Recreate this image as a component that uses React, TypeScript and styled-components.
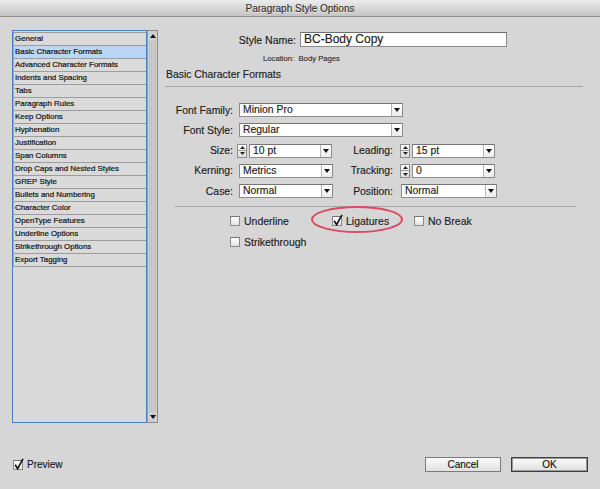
import React from 'react';
import styled, { createGlobalStyle } from 'styled-components';

const Global = createGlobalStyle`
  html, body { margin: 0; padding: 0; background: #d6d6d6; }
  body { font-family: "Liberation Sans", Arial, sans-serif; }
  * { box-sizing: border-box; }
`;

const Window = styled.div`
  width: 600px;
  height: 489px;
  background: #d6d6d6;
  display: flex;
  flex-direction: column;
  overflow: hidden;
  color: #1c1c1c;
  font-family: "Liberation Sans", Arial, sans-serif;
  -webkit-text-stroke: 0.15px currentColor;
`;

const TitleBar = styled.div`
  height: 17px;
  flex: none;
  border-bottom: 1px solid #8e8e8e;
  background: linear-gradient(#ececec, #c4c4c4);
  display: flex;
  align-items: center;
  justify-content: center;
  font-size: 10px;
  color: #333;
  text-shadow: 0 1px 0 rgba(255, 255, 255, 0.6);
`;

const Body = styled.div`
  display: flex;
  padding: 13px 12px 0 12px;
  flex: none;
`;

const ListPanel = styled.div`
  display: flex;
  width: 146px;
  height: 393px;
  flex: none;
`;

const List = styled.div`
  width: 135px;
  height: 100%;
  border: 1px solid #4a7dc4;
  background: #d9d9d9;
  padding-top: 1px;
`;

const ListRow = styled.div<{ $selected?: boolean }>`
  height: 13px;
  border-bottom: 1px solid #9c9c9c;
  border-left: 1px solid #a8a8a8;
  background: ${(p) => (p.$selected ? '#bcd7f6' : '#dadada')};
  font-size: 7.9px;
  line-height: 12px;
  padding-left: 1px;
  color: #141414;
  -webkit-text-stroke: 0.2px #141414;
  white-space: nowrap;
  &:first-child {
    border-top: 1px solid #9c9c9c;
    height: 14px;
  }
`;

const Scrollbar = styled.div`
  width: 11px;
  height: 100%;
  border: 1px solid #8c8c8c;
  border-left-color: #a0a0a0;
  background: repeating-linear-gradient(90deg, #cdcdcd 0 1px, #c1c1c1 1px 2px);
  display: flex;
  flex-direction: column;
  justify-content: space-between;
  align-items: center;
`;

const ScrollArrow = styled.div`
  height: 10px;
  width: 100%;
  display: flex;
  align-items: center;
  justify-content: center;
  background: #cfcfcf;
`;

const RightPanel = styled.div`
  margin-left: 7px;
  flex: 1;
  display: flex;
  flex-direction: column;
`;

const NameRow = styled.div`
  margin-top: 2px;
  display: flex;
  align-items: center;
  height: 15px;
`;

const NameLabel = styled.div`
  width: 131px;
  text-align: right;
  font-size: 10.5px;
  margin-right: 4px;
`;

const NameInput = styled.div`
  width: 207px;
  height: 15px;
  border: 1px solid #8a8a8a;
  border-top-color: #6e6e6e;
  background: #fff;
  font-size: 12px;
  line-height: 13px;
  padding-left: 3px;
`;

const Location = styled.div`
  margin-top: 7px;
  padding-left: 98px;
  font-size: 7.7px;
  line-height: 10px;
  color: #333;
  white-space: pre;
`;

const Heading = styled.div`
  margin-top: 5px;
  font-size: 10.4px;
  line-height: 12px;
  padding-left: 1px;
`;

const Separator = styled.div<{ $indent?: number; $width: number; $top: number }>`
  margin-top: ${(p) => p.$top}px;
  margin-left: ${(p) => p.$indent ?? 0}px;
  width: ${(p) => p.$width}px;
  height: 1px;
  background: #a6a6a6;
`;

const FormRows = styled.div`
  margin-top: 16px;
  display: flex;
  flex-direction: column;
  gap: 6.3px;
`;

const Row = styled.div`
  display: flex;
  align-items: center;
  height: 14px;
`;

const LeftCell = styled.div`
  min-width: 175px;
  flex: none;
  display: flex;
  align-items: center;
`;

const RightCell = styled.div`
  display: flex;
  align-items: center;
  flex: none;
`;

const FieldLabel = styled.div<{ $w: number; $gap: number }>`
  width: ${(p) => p.$w}px;
  flex: none;
  margin-right: ${(p) => p.$gap}px;
  text-align: right;
  font-size: 10.4px;
  white-space: nowrap;
`;

const SelectBox = styled.div<{ $w: number; $offset?: number }>`
  width: ${(p) => p.$w}px;
  flex: none;
  margin-left: ${(p) => p.$offset ?? 0}px;
  height: 14px;
  border: 1px solid #8c8c8c;
  border-top-color: #747474;
  background: #fff;
  display: flex;
  align-items: stretch;
`;

const SelectText = styled.div`
  flex: 1;
  font-size: 10.4px;
  line-height: 12px;
  padding-left: 3px;
  white-space: nowrap;
  overflow: hidden;
`;

const SelectArrow = styled.div`
  width: 11px;
  border-left: 1px solid #b4b4b4;
  display: flex;
  align-items: center;
  justify-content: center;
  background: linear-gradient(#ffffff, #ececec);
`;

const StepperBox = styled.div`
  width: 10px;
  height: 14px;
  flex: none;
  margin-right: 2px;
  border: 1px solid #8c8c8c;
  background: linear-gradient(#fdfdfd, #dedede);
  display: flex;
  flex-direction: column;
`;

const StepHalf = styled.div<{ $top?: boolean }>`
  flex: 1;
  display: flex;
  align-items: center;
  justify-content: center;
  border-bottom: ${(p) => (p.$top ? '1px solid #9a9a9a' : 'none')};
`;

const CheckGrid = styled.div`
  margin-top: 8px;
  margin-left: 65px;
  display: grid;
  grid-template-columns: 102px 82px auto;
  row-gap: 9px;
`;

const CheckItem = styled.div`
  position: relative;
  display: flex;
  align-items: center;
  height: 12px;
  gap: 4px;
  font-size: 10.5px;
  white-space: nowrap;
`;

const Box = styled.span`
  position: relative;
  width: 10px;
  height: 10px;
  flex: none;
  border: 1px solid #8a8a8a;
  border-top-color: #747474;
  background: linear-gradient(#ffffff, #e4e4e4);
  display: inline-block;
`;

const Tick = styled.svg`
  position: absolute;
  left: -1px;
  top: -3px;
  overflow: visible;
`;

const Highlight = styled.svg`
  position: absolute;
  left: -21px;
  top: -9px;
  overflow: visible;
  pointer-events: none;
`;

const Footer = styled.div`
  display: flex;
  align-items: center;
  padding: 34px 12px 0 13px;
  height: 49px;
`;

const PreviewItem = styled(CheckItem)`
  font-size: 10px;
  gap: 4px;
  height: 11px;
`;

const Spacer = styled.div`
  flex: 1;
`;

const Button = styled.div<{ $default?: boolean; $w: number }>`
  width: ${(p) => p.$w}px;
  height: 15px;
  margin-left: 10px;
  border: 1px solid ${(p) => (p.$default ? '#3e3e3e' : '#7a7a7a')};
  box-shadow: ${(p) => (p.$default ? 'inset 0 0 0 1px #9a9a9a' : 'none')};
  background: linear-gradient(#fbfbfb, #e0e0e0);
  font-size: 10px;
  display: flex;
  align-items: center;
  justify-content: center;
  color: #111;
`;

const Down = () => (
  <svg width="6" height="4" viewBox="0 0 6 4">
    <path d="M0 0 H6 L3 4 Z" fill="#111" />
  </svg>
);

const Up = () => (
  <svg width="6" height="4" viewBox="0 0 6 4">
    <path d="M0 4 H6 L3 0 Z" fill="#111" />
  </svg>
);

const SmallUp = () => (
  <svg width="5" height="3" viewBox="0 0 5 3">
    <path d="M0 3 H5 L2.5 0 Z" fill="#222" />
  </svg>
);
const SmallDown = () => (
  <svg width="5" height="3" viewBox="0 0 5 3">
    <path d="M0 0 H5 L2.5 3 Z" fill="#222" />
  </svg>
);

const Select = ({ value, w, offset }: { value: string; w: number; offset?: number }) => (
  <SelectBox $w={w} $offset={offset}>
    <SelectText>{value}</SelectText>
    <SelectArrow>
      <Down />
    </SelectArrow>
  </SelectBox>
);

const Stepper = () => (
  <StepperBox>
    <StepHalf $top>
      <SmallUp />
    </StepHalf>
    <StepHalf>
      <SmallDown />
    </StepHalf>
  </StepperBox>
);

const Checkbox = ({ checked }: { checked?: boolean }) => (
  <Box>
    {checked && (
      <Tick width="12" height="13" viewBox="0 0 12 13">
        <path d="M2.2 6.8 L4.6 10.6 L10 0.8" fill="none" stroke="#111" strokeWidth="1.6" />
      </Tick>
    )}
  </Box>
);

const items = [
  'General',
  'Basic Character Formats',
  'Advanced Character Formats',
  'Indents and Spacing',
  'Tabs',
  'Paragraph Rules',
  'Keep Options',
  'Hyphenation',
  'Justification',
  'Span Columns',
  'Drop Caps and Nested Styles',
  'GREP Style',
  'Bullets and Numbering',
  'Character Color',
  'OpenType Features',
  'Underline Options',
  'Strikethrough Options',
  'Export Tagging',
];

export default function App() {
  return (
    <>
      <Global />
      <Window>
        <TitleBar>Paragraph Style Options</TitleBar>
        <Body>
          <ListPanel>
            <List>
              {items.map((it) => (
                <ListRow key={it} $selected={it === 'Basic Character Formats'}>
                  {it}
                </ListRow>
              ))}
            </List>
            <Scrollbar>
              <ScrollArrow>
                <Up />
              </ScrollArrow>
              <ScrollArrow>
                <Down />
              </ScrollArrow>
            </Scrollbar>
          </ListPanel>
          <RightPanel>
            <NameRow>
              <NameLabel>Style Name:</NameLabel>
              <NameInput>BC-Body Copy</NameInput>
            </NameRow>
            <Location>{'Location:  Body Pages'}</Location>
            <Heading>Basic Character Formats</Heading>
            <Separator $width={418} $top={5} />
            <FormRows>
              <Row>
                <LeftCell>
                  <FieldLabel $w={68} $gap={4}>Font Family:</FieldLabel>
                  <Select value="Minion Pro" w={164} offset={2} />
                </LeftCell>
              </Row>
              <Row>
                <LeftCell>
                  <FieldLabel $w={68} $gap={4}>Font Style:</FieldLabel>
                  <Select value="Regular" w={164} offset={2} />
                </LeftCell>
              </Row>
              <Row>
                <LeftCell>
                  <FieldLabel $w={68} $gap={4}>Size:</FieldLabel>
                  <Stepper />
                  <Select value="10 pt" w={83} />
                </LeftCell>
                <RightCell>
                  <FieldLabel $w={53} $gap={7}>Leading:</FieldLabel>
                  <Stepper />
                  <Select value="15 pt" w={83} />
                </RightCell>
              </Row>
              <Row>
                <LeftCell>
                  <FieldLabel $w={68} $gap={4}>Kerning:</FieldLabel>
                  <Select value="Metrics" w={94} offset={2} />
                </LeftCell>
                <RightCell>
                  <FieldLabel $w={53} $gap={7}>Tracking:</FieldLabel>
                  <Stepper />
                  <Select value="0" w={83} />
                </RightCell>
              </Row>
              <Row>
                <LeftCell>
                  <FieldLabel $w={68} $gap={4}>Case:</FieldLabel>
                  <Select value="Normal" w={94} offset={2} />
                </LeftCell>
                <RightCell>
                  <FieldLabel $w={53} $gap={7}>Position:</FieldLabel>
                  <Select value="Normal" w={96} offset={1} />
                </RightCell>
              </Row>
            </FormRows>
            <Separator $indent={10} $width={401} $top={8} />
            <CheckGrid>
              <CheckItem>
                <Checkbox />
                Underline
              </CheckItem>
              <CheckItem>
                <Checkbox checked />
                Ligatures
                <Highlight width="92" height="27" viewBox="0 0 92 27">
                  <ellipse cx="46" cy="13.5" rx="45" ry="12.5" fill="none" stroke="#dc4a64" strokeWidth="2" />
                </Highlight>
              </CheckItem>
              <CheckItem>
                <Checkbox />
                No Break
              </CheckItem>
              <CheckItem>
                <Checkbox />
                Strikethrough
              </CheckItem>
            </CheckGrid>
          </RightPanel>
        </Body>
        <Footer>
          <PreviewItem>
            <Checkbox checked />
            Preview
          </PreviewItem>
          <Spacer />
          <Button $w={76}>Cancel</Button>
          <Button $w={77} $default>
            OK
          </Button>
        </Footer>
      </Window>
    </>
  );
}
